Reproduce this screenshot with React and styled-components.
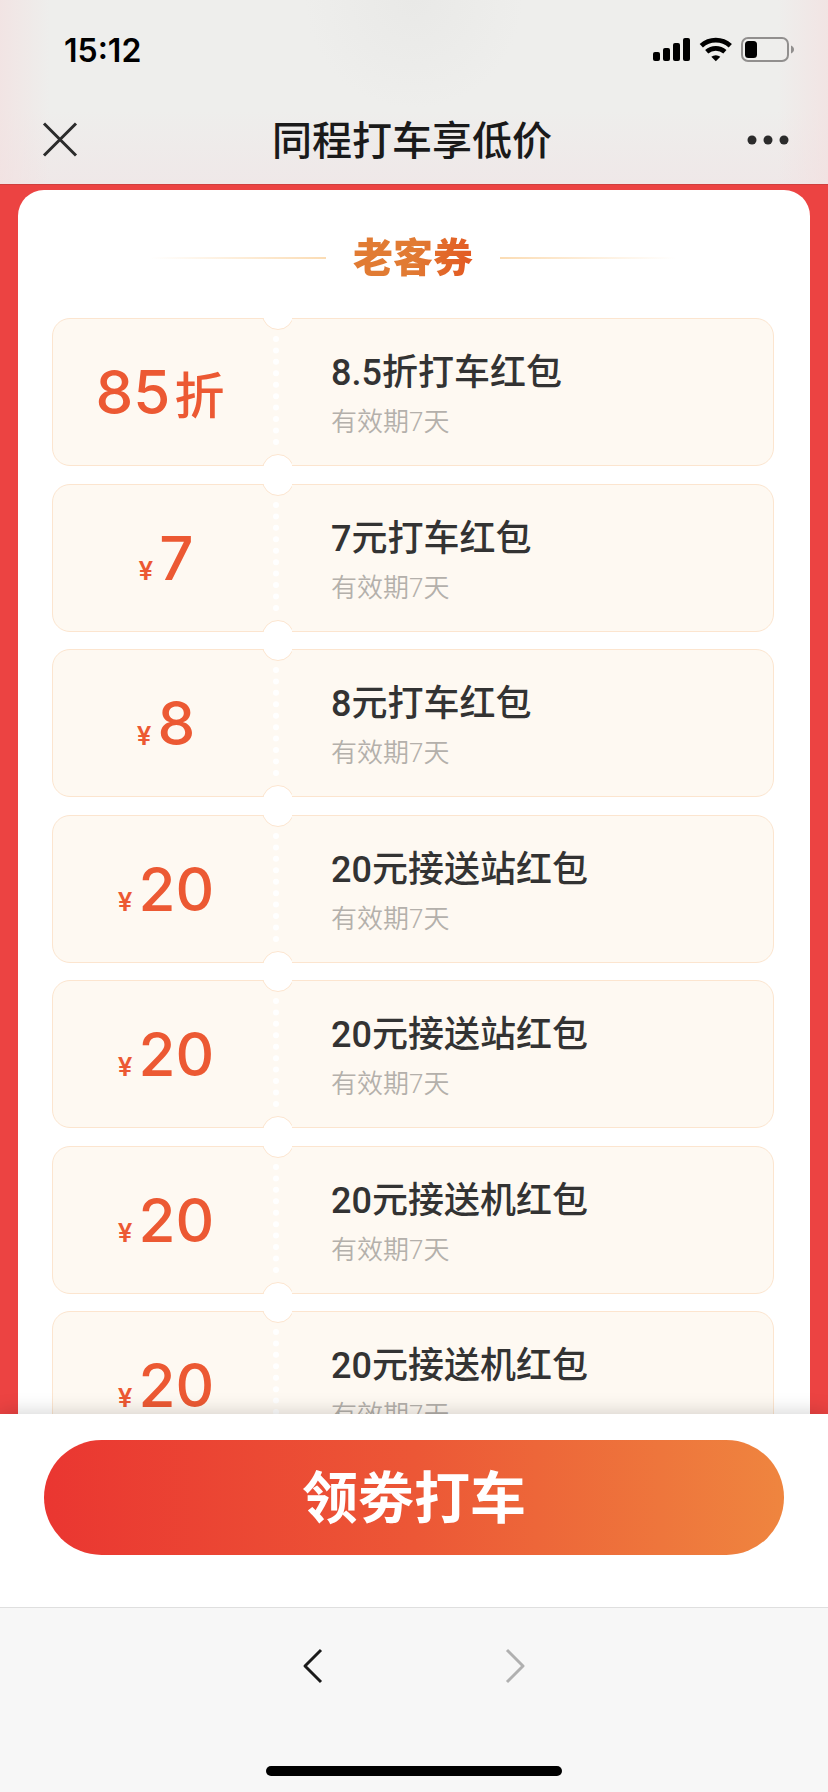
import React from "react";
import styled, { createGlobalStyle } from "styled-components";

const GlobalStyle = createGlobalStyle`
  * {
    box-sizing: border-box;
  }
  body {
    margin: 0;
    font-family: Roboto, "Noto Sans CJK SC", sans-serif;
  }
  h1, h2, h3, p, ul {
    margin: 0;
    padding: 0;
  }
  button {
    border: 0;
    padding: 0;
    background: none;
    font-family: inherit;
    cursor: pointer;
  }
  svg {
    display: block;
  }
`;

const Page = styled.div`
  height: 100vh;
  display: flex;
  flex-direction: column;
  background: #ec4342;
`;

const Header = styled.header`
  flex: none;
  background:
    linear-gradient(to right, rgba(243, 224, 224, 0.7), transparent 6%, transparent 94%, rgba(243, 224, 224, 0.7)),
    radial-gradient(circle at 50% 0, #e9e9e7, transparent 24%),
    linear-gradient(#eeeeec 60%, #efe8e8);
  border-bottom: 1px solid #cf3f3e;
`;

const StatusBar = styled.div`
  height: 96px;
  padding: 4px 34px 0 64px;
  display: flex;
  align-items: center;
  justify-content: space-between;
`;

const Time = styled.time`
  color: #000;
  font-family: Inter, sans-serif;
  font-size: 32px;
  font-weight: 600;
`;

const TitleBar = styled.div`
  height: 88px;
  padding: 0 38px 0 42px;
  display: grid;
  grid-template-columns: 36px 1fr 44px;
  align-items: center;
  h1 {
    padding-bottom: 4px;
    color: #1a1a1a;
    font-size: 40px;
    font-weight: 500;
    text-align: center;
  }
`;

const Content = styled.main`
  flex: 1;
  min-height: 0;
  padding: 5px 18px 0;
  overflow-y: auto;
  scrollbar-width: none;
`;

const Card = styled.section`
  padding: 36px 36px 36px 34px;
  border-radius: 26px;
  background: #fff;
`;

const CardTitle = styled.div`
  height: 64px;
  margin-bottom: 28px;
  display: flex;
  align-items: center;
  justify-content: center;
  gap: 27px;
  h2 {
    padding-top: 2px;
    font-size: 40px;
    font-weight: 900;
    line-height: 64px;
    color: transparent;
    background: linear-gradient(100deg, #e17b33 50%, #e35520);
    background-clip: text;
  }
`;

const Line = styled.span`
  width: 176px;
  height: 2px;
  background: linear-gradient(${(props) => props.$to}, transparent, #fbdcb4);
`;

const Coupon = styled.li`
  position: relative;
  height: 148px;
  display: grid;
  grid-template-columns: 220px 1fr;
  align-items: center;
  list-style: none;
  border: 1px solid #fce5cf;
  border-radius: 18px;
  background: #fef9f2;
  margin-bottom: 17px;
  &:nth-child(odd) {
    margin-bottom: 18px;
  }
`;

// white bite in the coupon edge, only the part inside the coupon is shown
const Notch = styled.span`
  position: absolute;
  left: 209px;
  ${(props) => (props.$bottom ? "bottom: -1px;" : "top: -1px;")}
  width: 30px;
  height: 12px;
  overflow: hidden;
  &::before {
    content: "";
    position: absolute;
    left: 0;
    ${(props) => (props.$bottom ? "top: 0;" : "bottom: 0;")}
    width: 30px;
    height: 30px;
    border: 1px solid #fce5cf;
    border-radius: 50%;
    background: #fff;
  }
`;

const Dots = styled.span`
  position: absolute;
  left: 220px;
  top: 17px;
  height: 109px;
  border-left: 6px dotted #fff;
`;

const Price = styled.p`
  padding: ${(props) => (props.$discount ? "0 6px 0 0" : "0 0 0 6px")};
  display: flex;
  align-items: baseline;
  justify-content: center;
  gap: ${(props) => (props.$discount ? "4px" : "6px")};
  color: #ec5933;
  font-family: Inter, "Noto Sans CJK SC", sans-serif;
  font-size: 60px;
  font-weight: 550;
  line-height: 72px;
`;

const Unit = styled.span`
  font-size: ${(props) => (props.$small ? "26px" : "50px")};
  font-weight: ${(props) => (props.$small ? 600 : 500)};
  line-height: 1;
`;

const Info = styled.div`
  padding: 7px 0 0 58px;
  h3 {
    color: #333;
    font-size: 36px;
    font-weight: 500;
    line-height: 52px;
  }
  p {
    color: #b4b0ab;
    font-size: 26px;
    font-weight: 350;
    line-height: 46px;
  }
`;

const ActionPanel = styled.div`
  position: relative;
  flex: none;
  padding: 26px 44px 52px;
  background: #fff;
  box-shadow: 0 0 20px rgba(0, 0, 0, 0.2);
`;

const ActionButton = styled.button`
  width: 100%;
  height: 115px;
  padding-bottom: 8px;
  border-radius: 58px;
  color: #fff;
  font-size: 56px;
  font-weight: 700;
  background: linear-gradient(to right, #ea3631, #ec5736 50%, #ef853f);
`;

const Toolbar = styled.nav`
  position: relative;
  flex: none;
  height: 185px;
  padding: 36px 0 16px;
  display: flex;
  flex-direction: column;
  align-items: center;
  justify-content: space-between;
  background: #f7f7f7;
  border-top: 1px solid #dfdfdf;
`;

const NavButtons = styled.div`
  display: flex;
  gap: 168px;
`;

const HomeBar = styled.div`
  width: 296px;
  height: 10px;
  border-radius: 5px;
  background: #000;
`;

const StatusIcons = () => (
  <svg width="142" height="26" viewBox="0 0 142 26" aria-hidden="true">
    <rect x="1" y="15" width="7" height="9" rx="2" />
    <rect x="11" y="11" width="7" height="13" rx="2" />
    <rect x="21" y="6" width="7" height="18" rx="2" />
    <rect x="31" y="1" width="7" height="23" rx="2" />
    <g fill="none" stroke="#000" strokeWidth="4.8">
      <path d="M49.300 8.700a21.500 21.500 0 0 1 29 0" />
      <path d="M54.700 14.700a14 14 0 0 1 18.200 0" />
    </g>
    <path d="M59.300 19.800a7 7 0 0 1 9 0L63.800 24.300z" />
    <rect x="90" y="1" width="46" height="23" rx="6" fill="none" stroke="#918f8e" strokeWidth="2" />
    <rect x="93" y="4" width="12" height="17" rx="3.500" />
    <path d="M139 8.500c4 1.500 4 6.500 0 8z" fill="#918f8e" />
  </svg>
);

const coupons = [
  { amount: "85", discount: true, title: "8.5折打车红包" },
  { amount: "7", title: "7元打车红包" },
  { amount: "8", title: "8元打车红包" },
  { amount: "20", title: "20元接送站红包" },
  { amount: "20", title: "20元接送站红包" },
  { amount: "20", title: "20元接送机红包" },
  { amount: "20", title: "20元接送机红包" },
];

const App = () => {
  return (
    <Page>
      <GlobalStyle />
      <Header>
        <StatusBar>
          <Time>15:12</Time>
          <StatusIcons />
        </StatusBar>
        <TitleBar>
          <button type="button" aria-label="关闭">
            <svg width="36" height="36" fill="none" stroke="#2b2b2b" strokeWidth="3">
              <path d="M2 1.500l32 32M34 1.500l-32 32" />
            </svg>
          </button>
          <h1>同程打车享低价</h1>
          <button type="button" aria-label="更多">
            <svg width="44" height="12" fill="#2b2b2b">
              <circle cx="6" cy="6" r="4.500" />
              <circle cx="22" cy="6" r="4.500" />
              <circle cx="38" cy="6" r="4.500" />
            </svg>
          </button>
        </TitleBar>
      </Header>

      <Content>
        <Card>
          <CardTitle>
            <Line $to="to right" />
            <h2>老客券</h2>
            <Line $to="to left" />
          </CardTitle>
          <ul>
            {coupons.map((item, i) => (
              <Coupon key={i}>
                <Price $discount={item.discount}>
                  {!item.discount && <Unit $small>¥</Unit>}
                  {item.amount}
                  {item.discount && <Unit>折</Unit>}
                </Price>
                <Info>
                  <h3>{item.title}</h3>
                  <p>有效期7天</p>
                </Info>
                <Notch />
                <Dots />
                <Notch $bottom />
              </Coupon>
            ))}
          </ul>
        </Card>
      </Content>

      <ActionPanel>
        <ActionButton type="button">领劵打车</ActionButton>
      </ActionPanel>

      <Toolbar>
        <NavButtons>
          <button type="button" aria-label="后退">
            <svg width="32" height="44" fill="none" stroke="#1a1a1a" strokeWidth="3" strokeLinejoin="round">
              <path d="M23 6L7 22l16 16" />
            </svg>
          </button>
          <button type="button" aria-label="前进">
            <svg width="32" height="44" fill="none" stroke="#b0b0b0" strokeWidth="3" strokeLinejoin="round">
              <path d="M9 6l16 16L9 38" />
            </svg>
          </button>
        </NavButtons>
        <HomeBar />
      </Toolbar>
    </Page>
  );
};

export default App;
